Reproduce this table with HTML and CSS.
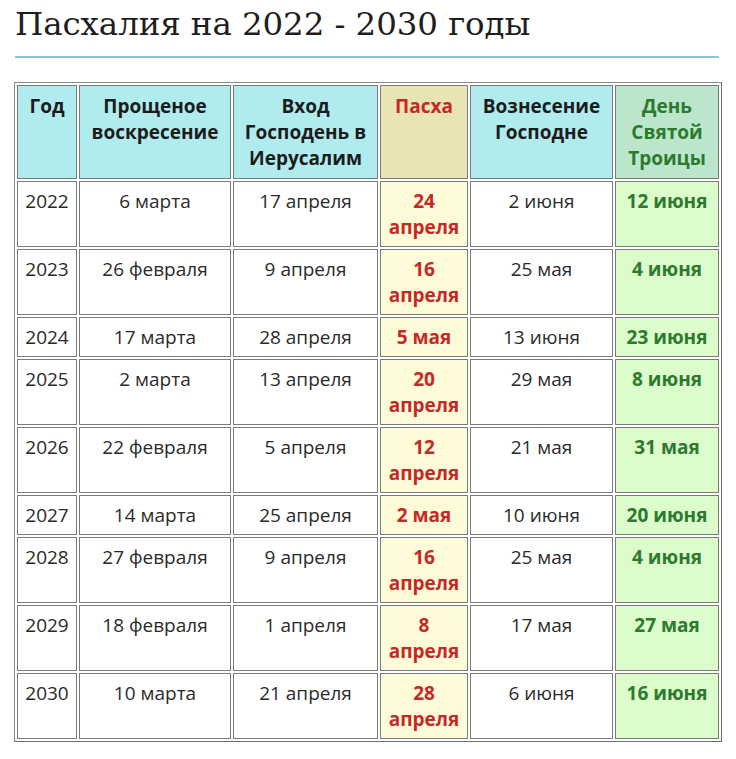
FILE: index.html
```html
<!DOCTYPE html>
<html lang="ru">
<head>
<meta charset="utf-8">
<title>Пасхалия на 2022 - 2030 годы</title>
<link rel="stylesheet" href="styles.css">
</head>
<body>
<div class="page">
  <h1 class="title">Пасхалия на 2022 - 2030 годы</h1>
  <table class="easter">
    <colgroup>
      <col class="c-year"><col class="c-fs"><col class="c-palm"><col class="c-easter"><col class="c-asc"><col class="c-trin">
    </colgroup>
    <thead>
      <tr>
        <th>Год</th>
        <th>Прощеное воскресение</th>
        <th>Вход Господень в Иерусалим</th>
        <th class="easter-h">Пасха</th>
        <th>Вознесение Господне</th>
        <th class="trin-h">День Святой Троицы</th>
      </tr>
    </thead>
    <tbody>
      <tr><td>2022</td><td>6 марта</td><td>17 апреля</td><td class="easter-d">24 апреля</td><td>2 июня</td><td class="trin-d">12 июня</td></tr>
      <tr><td>2023</td><td>26 февраля</td><td>9 апреля</td><td class="easter-d">16 апреля</td><td>25 мая</td><td class="trin-d">4 июня</td></tr>
      <tr><td>2024</td><td>17 марта</td><td>28 апреля</td><td class="easter-d">5 мая</td><td>13 июня</td><td class="trin-d">23 июня</td></tr>
      <tr><td>2025</td><td>2 марта</td><td>13 апреля</td><td class="easter-d">20 апреля</td><td>29 мая</td><td class="trin-d">8 июня</td></tr>
      <tr><td>2026</td><td>22 февраля</td><td>5 апреля</td><td class="easter-d">12 апреля</td><td>21 мая</td><td class="trin-d">31 мая</td></tr>
      <tr><td>2027</td><td>14 марта</td><td>25 апреля</td><td class="easter-d">2 мая</td><td>10 июня</td><td class="trin-d">20 июня</td></tr>
      <tr><td>2028</td><td>27 февраля</td><td>9 апреля</td><td class="easter-d">16 апреля</td><td>25 мая</td><td class="trin-d">4 июня</td></tr>
      <tr><td>2029</td><td>18 февраля</td><td>1 апреля</td><td class="easter-d">8 апреля</td><td>17 мая</td><td class="trin-d">27 мая</td></tr>
      <tr><td>2030</td><td>10 марта</td><td>21 апреля</td><td class="easter-d">28 апреля</td><td>6 июня</td><td class="trin-d">16 июня</td></tr>
    </tbody>
  </table>
</div>
</body>
</html>
```

FILE: styles.css
```css
html, body {
  margin: 0;
  padding: 0;
  background: #ffffff;
}

.page {
  padding: 0 16px 0 14px;
  font-family: "Open Sans", "Noto Sans", sans-serif;
  color: #222222;
}

.title {
  margin: 0 1px 0 1px;
  padding: 5px 0 13px;
  font-family: "DejaVu Serif", "Liberation Serif", serif;
  font-weight: normal;
  font-size: 32.5px;
  line-height: 38px;
  letter-spacing: -0.1px;
  color: #1e1e1e;
  border-bottom: 2px solid #8cc4dc;
}

.easter {
  margin-top: 24px;
  width: 708px;
  table-layout: fixed;
  border-collapse: separate;
  border-spacing: 2px;
  border: 1px solid #8a8a8a;
  border-right-color: #6e6e6e;
  border-bottom-color: #6e6e6e;
  font-size: 19px;
  line-height: 26px;
}

.c-year { width: 60px; }
.c-fs { width: 152px; }
.c-palm { width: 145px; }
.c-easter { width: 88px; }
.c-asc { width: 143px; }
.c-trin { width: 104px; }

.easter th,
.easter td {
  border: 1px solid #7a7a7a;
  padding: 6px 3px;
  text-align: center;
  vertical-align: top;
}

.easter th {
  padding-top: 7px;
  padding-bottom: 7px;
  background: #b0ecee;
  font-weight: 700;
  color: #1c1c1c;
}

.easter td {
  color: #2a2a2a;
  background: #ffffff;
}

.easter th.easter-h {
  background: #e8e4b4;
  color: #c62828;
}

.easter th.trin-h {
  background: #bce6cc;
  color: #2b7a2e;
}

.easter td.easter-d {
  background: #fdfbd8;
  color: #c62828;
  font-weight: 700;
}

.easter td.trin-d {
  background: #dcfccc;
  color: #2b7a2e;
  font-weight: 700;
}
```
